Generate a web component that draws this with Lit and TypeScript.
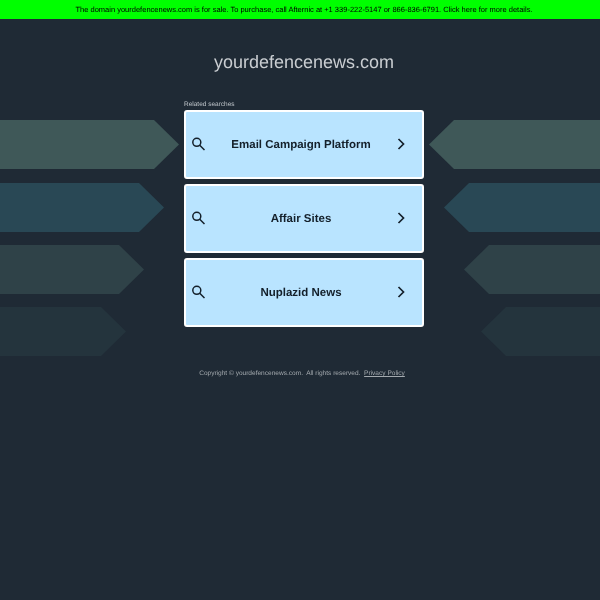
import { LitElement, html, css, svg } from "lit";
import { customElement } from "lit/decorators.js";

const ARROWS = [
  { y: 120, h: 49, l: 154, r: 454, fill: "#3f5858" },
  { y: 183, h: 49, l: 139, r: 469, fill: "#294855" },
  { y: 245, h: 49, l: 119, r: 489, fill: "#2f4248" },
  { y: 307, h: 49, l: 101, r: 506, fill: "#24343d" },
];
const SEARCHES = ["Email Campaign Platform", "Affair Sites", "Nuplazid News"];

@customElement("app-root")
export class AppRoot extends LitElement {
  static styles = css`
    :host {
      display: block;
      position: relative;
      width: 600px;
      height: 600px;
      overflow: hidden;
      background: #1f2a35;
      font-family: "Liberation Sans", Arial, sans-serif;
      text-rendering: geometricPrecision;
    }
    .decor {
      position: absolute;
      inset: 0;
      width: 600px;
      height: 600px;
    }
    .page {
      position: relative;
      display: flex;
      flex-direction: column;
      will-change: transform;
    }
    .banner {
      box-sizing: border-box;
      height: 19px;
      padding-left: 8px;
      background: #00ff00;
      color: #000;
      font-size: 7.5px;
      line-height: 19px;
      text-align: center;
      white-space: nowrap;
    }
    h1 {
      margin: 31px 0 0 8px;
      height: 24px;
      font-size: 18px;
      line-height: 25px;
      font-weight: 400;
      color: #c9cdd1;
      text-align: center;
    }
    .results {
      width: 240px;
      margin: 26px 0 0 184px;
    }
    .label {
      height: 10px;
      font-size: 6.5px;
      line-height: 9px;
      color: #c0c6cb;
    }
    .cards {
      display: flex;
      flex-direction: column;
      gap: 5px;
    }
    .card {
      box-sizing: border-box;
      height: 69px;
      display: flex;
      align-items: center;
      padding: 0 17px 0 5px;
      border: 2px solid #fff;
      border-radius: 3px;
      background: #b9e4ff;
      color: #14202b;
      font-size: 11.5px;
      font-weight: 700;
    }
    .card span {
      flex: 1;
      text-align: center;
    }
    .card svg {
      flex: none;
      display: block;
      fill: none;
      stroke: #14202b;
      margin-top: -1px;
    }
    .footer {
      margin: 43px 0 0 4px;
      font-size: 6.55px;
      line-height: 8px;
      color: #a3a9ae;
      text-align: center;
      white-space: pre;
    }
    .footer a {
      color: #a3a9ae;
      text-decoration: underline;
    }
  `;

  render() {
    return html`
      <svg class="decor" viewBox="0 0 600 600" aria-hidden="true">
        ${ARROWS.map((a) => {
          const mid = a.y + a.h / 2;
          const bottom = a.y + a.h;
          return svg`
            <polygon fill=${a.fill} points="0,${a.y} ${a.l},${a.y} ${a.l + 25},${mid} ${a.l},${bottom} 0,${bottom}"></polygon>
            <polygon fill=${a.fill} points="600,${a.y} ${a.r},${a.y} ${a.r - 25},${mid} ${a.r},${bottom} 600,${bottom}"></polygon>
          `;
        })}
      </svg>
      <div class="page">
        <div class="banner">The domain yourdefencenews.com is for sale. To purchase, call Afternic at +1 339-222-5147 or 866-836-6791. Click here for more details.</div>
        <h1>yourdefencenews.com</h1>
        <div class="results">
          <div class="label">Related searches</div>
          <div class="cards">
            ${SEARCHES.map(
              (s) => html`
                <div class="card">
                  <svg width="14" height="14" viewBox="0 0 14 14" stroke-width="1.5">
                    <circle cx="5.8" cy="5.3" r="4"></circle>
                    <path d="M8.7 8.2 L13.5 13"></path>
                  </svg>
                  <span>${s}</span>
                  <svg width="8" height="12" viewBox="0 0 8 12" stroke-width="1.7">
                    <path d="M1.5 1 L6.5 6 L1.5 11"></path>
                  </svg>
                </div>
              `
            )}
          </div>
        </div>
        <div class="footer">Copyright © yourdefencenews.com.  All rights reserved.  <a>Privacy Policy</a></div>
      </div>
    `;
  }
}
